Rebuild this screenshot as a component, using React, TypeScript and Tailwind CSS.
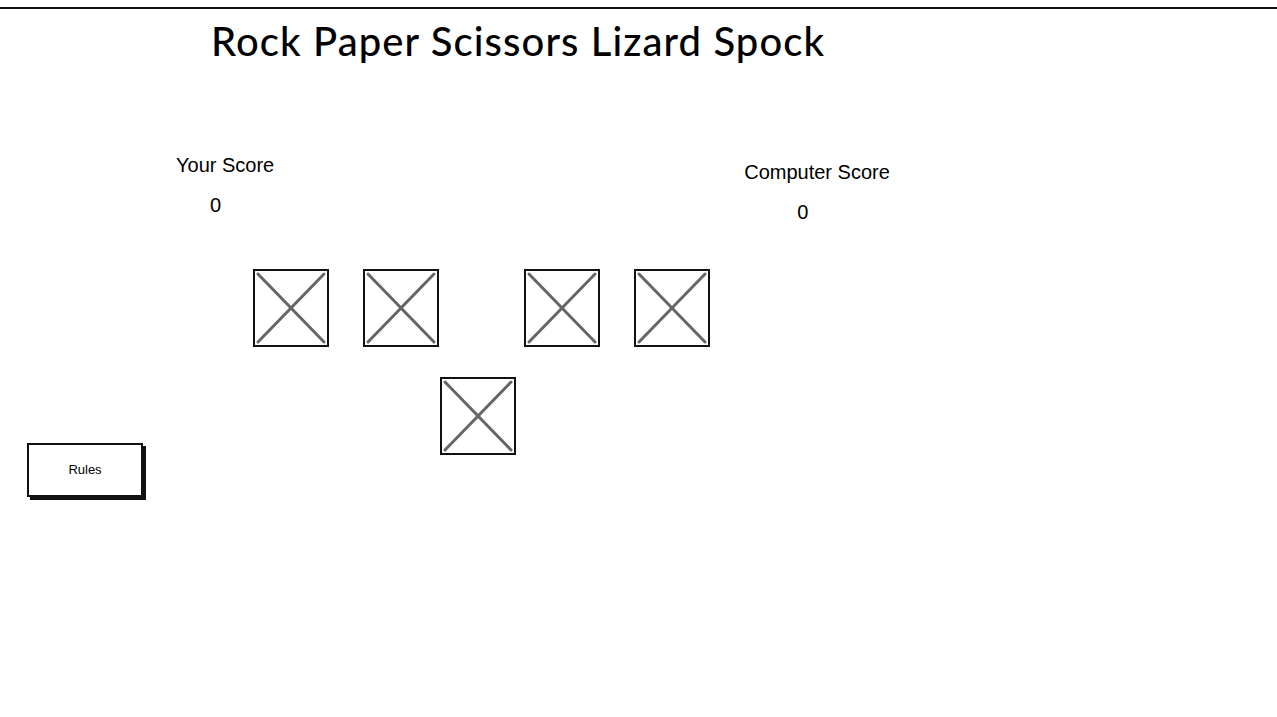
import React from "react";

function Placeholder() {
  return (
    <div className="w-[76px] h-[78px] border-2 border-[#111] bg-white">
      <svg viewBox="0 0 72 74" className="w-full h-full block">
        <line x1="3" y1="3" x2="69" y2="71" stroke="#666" strokeWidth="3" strokeLinecap="round" />
        <line x1="69" y1="3" x2="3" y2="71" stroke="#666" strokeWidth="3" strokeLinecap="round" />
      </svg>
    </div>
  );
}

export default function App() {
  return (
    <div className="pt-[7px] bg-white min-h-[717px]">
      <div className="border-t-2 border-[#111] min-h-[708px]">
        {/* TITLE */}
        <h1 className="ml-[211px] mt-[8px] text-[40px] leading-[48px] tracking-[1.1px] font-medium text-black font-['Lato',sans-serif]">
          Rock Paper Scissors Lizard Spock
        </h1>

        {/* SCORES */}
        <div className="flex mt-[89px] font-['Liberation_Sans',Arial,sans-serif] text-[20px] text-black">
          <div className="ml-[176px]">
            <div className="leading-[22px]">Your Score</div>
            <div className="ml-[34px] mt-[18px] leading-[22px]">0</div>
          </div>
          <div className="ml-[470px] mt-[7px]">
            <div className="leading-[22px]">Computer Score</div>
            <div className="ml-[53px] mt-[18px] leading-[22px]">0</div>
          </div>
        </div>

        {/* CHOICES */}
        <div className="flex mt-[46px] ml-[253px]">
          <Placeholder />
          <div className="ml-[34px]">
            <Placeholder />
          </div>
          <div className="ml-[85px]">
            <Placeholder />
          </div>
          <div className="ml-[34px]">
            <Placeholder />
          </div>
        </div>
        <div className="flex mt-[30px] ml-[440px]">
          <Placeholder />
        </div>

        {/* RULES */}
        <div className="ml-[27px] -mt-[12px]">
          <button className="w-[116px] h-[54px] border-2 border-[#111] bg-white shadow-[3px_3px_0_#111] text-[13px] text-black font-['Liberation_Sans',Arial,sans-serif]">
            Rules
          </button>
        </div>
      </div>
    </div>
  );
}
